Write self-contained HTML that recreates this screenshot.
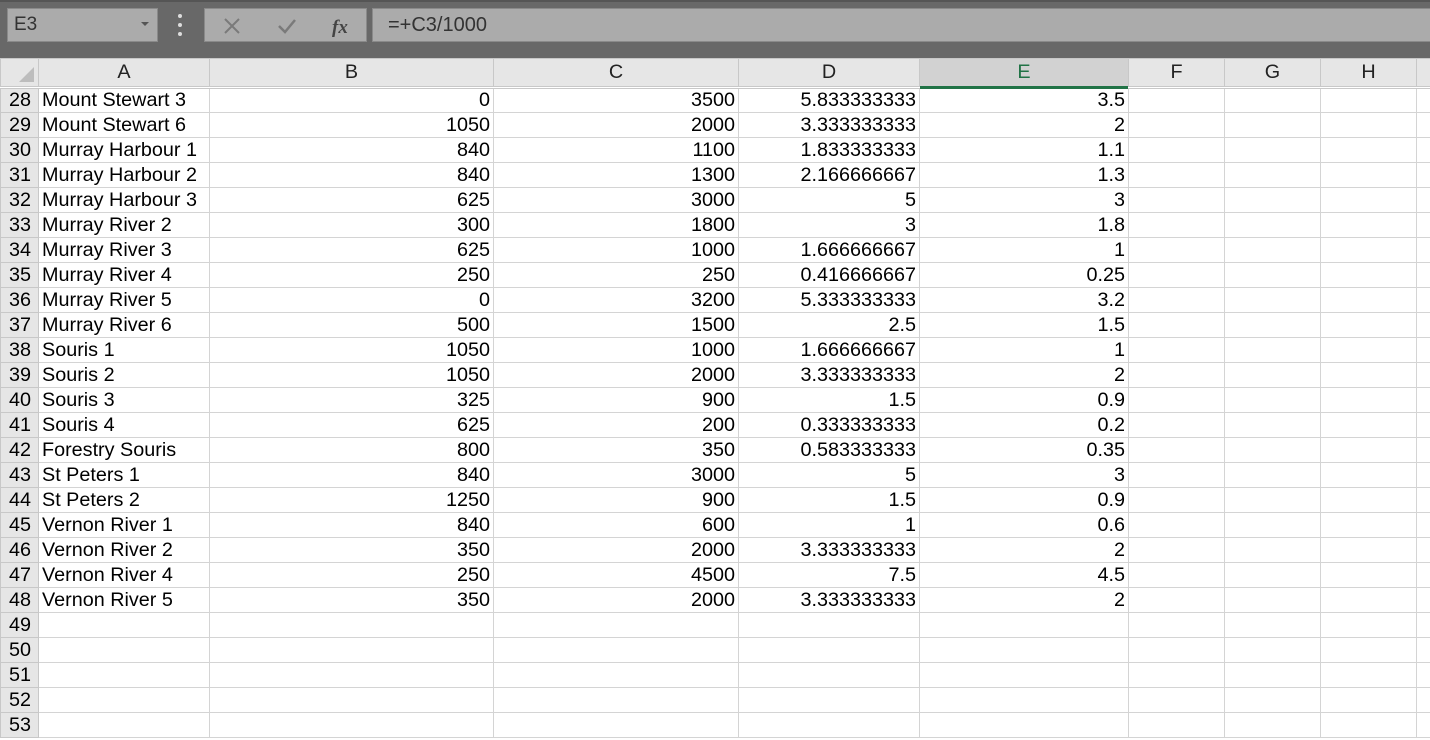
<!DOCTYPE html><html><head><style>
*{margin:0;padding:0;box-sizing:border-box}
body{width:1430px;height:740px;overflow:hidden;background:#fff;font-family:"Liberation Sans",Arial,sans-serif;position:relative}
.top{position:absolute;left:0;top:0;width:1430px;height:58px;background:#686868;border-top:2px solid #555}
.box{position:absolute;background:#ababab;border:1px solid #8a8a8a;top:8px;height:34px}
table{position:absolute;left:0;top:58px;width:1450px;border-collapse:collapse;table-layout:fixed;font-size:19.8px}
td{border:1px solid #d4d4d4;height:25px;padding:0 3px;white-space:nowrap;overflow:hidden;line-height:23px}
tr.h td{height:29px;background:#e6e6e6;text-align:center;color:#222;border-color:#c8c8c8;border-bottom:3px double #c8c8c8}
td.r{background:#e6e6e6;text-align:left;padding-left:8px;padding-right:0;border-color:#c8c8c8}
td.n{text-align:right}
</style></head><body>
<div class="top"></div>
<div class="box" style="left:7px;width:151px;font-size:19px;color:#333;padding:5px 6px">E3<span style="position:absolute;right:8px;top:13px;border:4px solid transparent;border-top:4px solid #555"></span></div>
<div style="position:absolute;left:178px;top:14px;width:4px;height:22px;border-left:4px dotted #ddd"></div>
<div class="box" style="left:204px;width:163px">
<svg width="163" height="34"><path d="M20 10l14 14M34 10l-14 14" stroke="#7a7a7a" stroke-width="2" fill="none"/><path d="M74 17l6 6 10-12" stroke="#7a7a7a" stroke-width="2.5" fill="none"/><text x="127" y="24" font-family="Liberation Serif" font-style="italic" font-weight="bold" font-size="19" fill="#444">fx</text></svg></div>
<div class="box" style="left:372px;width:1070px;font-size:20px;color:#333;padding:5px 15px">=+C3/1000</div>
<table>
<colgroup><col style="width:38px"><col style="width:171px"><col style="width:284px"><col style="width:245px"><col style="width:181px"><col style="width:209px"><col style="width:96px"><col style="width:96px"><col style="width:96px"><col style="width:34px"></colgroup>
<tr class="h"><td style="position:relative"><svg width="20" height="16" style="position:absolute;right:2px;bottom:3px"><path d="M18 0V15H3Z" fill="#bdbdbd"/></svg></td><td>A</td><td>B</td><td>C</td><td>D</td><td style="background:#d2d2d2;color:#217346;border-bottom:3px solid #217346">E</td><td>F</td><td>G</td><td>H</td><td></td></tr>
<tr><td class="r">28</td><td>Mount Stewart 3</td><td class="n">0</td><td class="n">3500</td><td class="n">5.833333333</td><td class="n">3.5</td><td></td><td></td><td></td><td></td></tr>
<tr><td class="r">29</td><td>Mount Stewart 6</td><td class="n">1050</td><td class="n">2000</td><td class="n">3.333333333</td><td class="n">2</td><td></td><td></td><td></td><td></td></tr>
<tr><td class="r">30</td><td>Murray Harbour 1</td><td class="n">840</td><td class="n">1100</td><td class="n">1.833333333</td><td class="n">1.1</td><td></td><td></td><td></td><td></td></tr>
<tr><td class="r">31</td><td>Murray Harbour 2</td><td class="n">840</td><td class="n">1300</td><td class="n">2.166666667</td><td class="n">1.3</td><td></td><td></td><td></td><td></td></tr>
<tr><td class="r">32</td><td>Murray Harbour 3</td><td class="n">625</td><td class="n">3000</td><td class="n">5</td><td class="n">3</td><td></td><td></td><td></td><td></td></tr>
<tr><td class="r">33</td><td>Murray River 2</td><td class="n">300</td><td class="n">1800</td><td class="n">3</td><td class="n">1.8</td><td></td><td></td><td></td><td></td></tr>
<tr><td class="r">34</td><td>Murray River 3</td><td class="n">625</td><td class="n">1000</td><td class="n">1.666666667</td><td class="n">1</td><td></td><td></td><td></td><td></td></tr>
<tr><td class="r">35</td><td>Murray River 4</td><td class="n">250</td><td class="n">250</td><td class="n">0.416666667</td><td class="n">0.25</td><td></td><td></td><td></td><td></td></tr>
<tr><td class="r">36</td><td>Murray River 5</td><td class="n">0</td><td class="n">3200</td><td class="n">5.333333333</td><td class="n">3.2</td><td></td><td></td><td></td><td></td></tr>
<tr><td class="r">37</td><td>Murray River 6</td><td class="n">500</td><td class="n">1500</td><td class="n">2.5</td><td class="n">1.5</td><td></td><td></td><td></td><td></td></tr>
<tr><td class="r">38</td><td>Souris 1</td><td class="n">1050</td><td class="n">1000</td><td class="n">1.666666667</td><td class="n">1</td><td></td><td></td><td></td><td></td></tr>
<tr><td class="r">39</td><td>Souris 2</td><td class="n">1050</td><td class="n">2000</td><td class="n">3.333333333</td><td class="n">2</td><td></td><td></td><td></td><td></td></tr>
<tr><td class="r">40</td><td>Souris 3</td><td class="n">325</td><td class="n">900</td><td class="n">1.5</td><td class="n">0.9</td><td></td><td></td><td></td><td></td></tr>
<tr><td class="r">41</td><td>Souris 4</td><td class="n">625</td><td class="n">200</td><td class="n">0.333333333</td><td class="n">0.2</td><td></td><td></td><td></td><td></td></tr>
<tr><td class="r">42</td><td>Forestry Souris</td><td class="n">800</td><td class="n">350</td><td class="n">0.583333333</td><td class="n">0.35</td><td></td><td></td><td></td><td></td></tr>
<tr><td class="r">43</td><td>St Peters 1</td><td class="n">840</td><td class="n">3000</td><td class="n">5</td><td class="n">3</td><td></td><td></td><td></td><td></td></tr>
<tr><td class="r">44</td><td>St Peters 2</td><td class="n">1250</td><td class="n">900</td><td class="n">1.5</td><td class="n">0.9</td><td></td><td></td><td></td><td></td></tr>
<tr><td class="r">45</td><td>Vernon River 1</td><td class="n">840</td><td class="n">600</td><td class="n">1</td><td class="n">0.6</td><td></td><td></td><td></td><td></td></tr>
<tr><td class="r">46</td><td>Vernon River 2</td><td class="n">350</td><td class="n">2000</td><td class="n">3.333333333</td><td class="n">2</td><td></td><td></td><td></td><td></td></tr>
<tr><td class="r">47</td><td>Vernon River 4</td><td class="n">250</td><td class="n">4500</td><td class="n">7.5</td><td class="n">4.5</td><td></td><td></td><td></td><td></td></tr>
<tr><td class="r">48</td><td>Vernon River 5</td><td class="n">350</td><td class="n">2000</td><td class="n">3.333333333</td><td class="n">2</td><td></td><td></td><td></td><td></td></tr>
<tr><td class="r">49</td><td></td><td></td><td></td><td></td><td></td><td></td><td></td><td></td><td></td></tr>
<tr><td class="r">50</td><td></td><td></td><td></td><td></td><td></td><td></td><td></td><td></td><td></td></tr>
<tr><td class="r">51</td><td></td><td></td><td></td><td></td><td></td><td></td><td></td><td></td><td></td></tr>
<tr><td class="r">52</td><td></td><td></td><td></td><td></td><td></td><td></td><td></td><td></td><td></td></tr>
<tr><td class="r">53</td><td></td><td></td><td></td><td></td><td></td><td></td><td></td><td></td><td></td></tr>
</table>
</body></html>
